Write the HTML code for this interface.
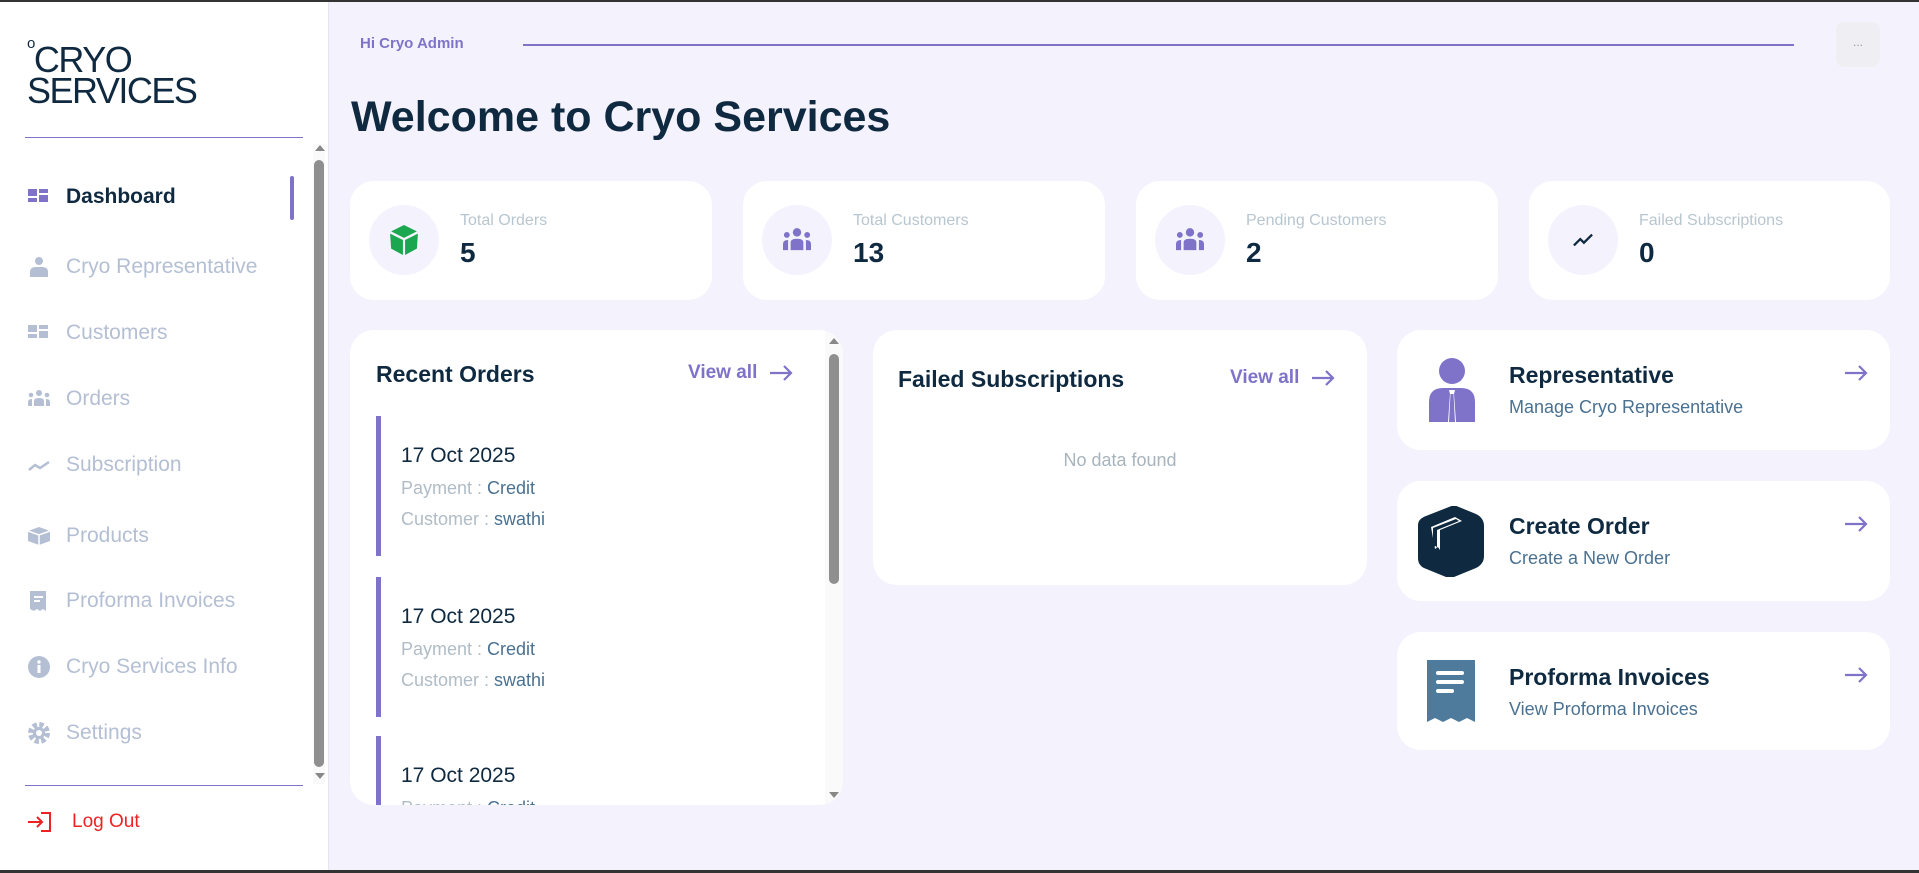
<!DOCTYPE html>
<html><head><meta charset="utf-8"><style>
*{box-sizing:border-box;margin:0;padding:0}
body{width:1919px;height:873px;overflow:hidden;background:#f4f3fd;font-family:"Liberation Sans",sans-serif;position:relative;color:#0f2a40}
.abs{position:absolute}
.top{left:0;top:0;width:1919px;height:2px;background:#333}
.bot{left:0;top:870px;width:1919px;height:3px;background:#333}
.side{left:0;top:2px;width:329px;height:868px;background:#fff;border-right:1px solid #e6e4f3}
.nav{position:absolute;left:27px;font-size:21px;color:#b4bfd4;display:flex;align-items:center}
.nav svg{width:24px;height:22px;margin-right:15px}
.card{position:absolute;background:#fff;border-radius:24px}
.ic{position:absolute;left:19px;top:24px;width:70px;height:70px;border-radius:50%;background:#f4f3fd;display:flex;align-items:center;justify-content:center}
.lab{position:absolute;left:110px;top:31px;font-size:16px;color:#b8c6cf}
.val{position:absolute;left:110px;top:56px;font-size:28px;font-weight:bold;color:#0f2a40}
.h{font-size:23px;font-weight:bold;color:#0f2a40;position:absolute}
.va{position:absolute;font-size:19px;font-weight:bold;color:#7f73c9;display:flex;align-items:center}
.va svg{margin-left:12px}
.ord{position:absolute;left:26px;width:420px;height:140px;border-left:5px solid #7f73c9;padding-left:20px}
.ord .d{font-size:21px;margin-top:28px;color:#0f2a40}
.ord .p{font-size:18px;color:#b0bcc6;margin-top:10px}
.ord .p b{font-weight:normal;color:#4a7191}
.rc .t{position:absolute;left:112px;top:32px;font-size:23px;font-weight:bold}
.rc .s{position:absolute;left:112px;top:67px;font-size:18px;color:#4a7191}
.rc .ar{position:absolute;right:22px;top:35px}
</style></head><body>
<div class="abs top"></div>
<div class="abs side">
 <div class="abs" style="left:27px;top:42px;font-size:36px;line-height:31px;color:#0f2a40;letter-spacing:-1.5px">
  <span style="font-size:15px;vertical-align:top;line-height:12px;position:relative;top:-6px">o</span>CRYO<br>SERVICES</div>
 <div class="abs" style="left:25px;top:135px;width:278px;height:1px;background:#7f73c9"></div>
 <div class="abs" style="left:313px;top:142px;width:12px;height:640px;background:#fafafa"></div>
 <div class="abs" style="left:315px;top:143px;width:0;height:0;border-left:5px solid transparent;border-right:5px solid transparent;border-bottom:6px solid #888"></div>
 <div class="abs" style="left:314px;top:158px;width:10px;height:607px;border-radius:5px;background:#8f8f8f"></div>
 <div class="abs" style="left:315px;top:771px;width:0;height:0;border-left:5px solid transparent;border-right:5px solid transparent;border-top:6px solid #888"></div>
 <div class="abs" style="left:290px;top:174px;width:4px;height:44px;border-radius:2px;background:#7f73c9"></div>

 <div class="nav" style="top:183px;color:#0f2a40;font-weight:bold"><svg viewBox="0 0 24 22"><rect x="1" y="3" width="9" height="7" fill="#7f73c9"/><rect x="12" y="3" width="9" height="4" fill="#7f73c9"/><rect x="1" y="12" width="9" height="4" fill="#7f73c9"/><rect x="12" y="9" width="9" height="7" fill="#7f73c9"/></svg>Dashboard</div>
 <div class="nav" style="top:253px"><svg viewBox="0 0 24 22"><circle cx="12" cy="5" r="4" fill="#b4bfd4"/><path d="M3 21v-5q0-5 6-5h6q6 0 6 5v5z" fill="#b4bfd4"/></svg>Cryo Representative</div>
 <div class="nav" style="top:319px"><svg viewBox="0 0 24 22"><rect x="1" y="3" width="9" height="7" fill="#b4bfd4"/><rect x="12" y="3" width="9" height="4" fill="#b4bfd4"/><rect x="1" y="12" width="9" height="4" fill="#b4bfd4"/><rect x="12" y="9" width="9" height="7" fill="#b4bfd4"/></svg>Customers</div>
 <div class="nav" style="top:385px"><svg viewBox="0 0 24 22"><circle cx="12" cy="5" r="3" fill="#b4bfd4"/><circle cx="4" cy="7" r="2.3" fill="#b4bfd4"/><circle cx="20" cy="7" r="2.3" fill="#b4bfd4"/><path d="M7 18v-5q0-3 5-3t5 3v5zM1 18v-4q0-3 4-3v7zM23 18v-4q0-3-4-3v7z" fill="#b4bfd4"/></svg>Orders</div>
 <div class="nav" style="top:451px"><svg viewBox="0 0 24 22"><path d="M2 16l6-5 5 3 9-6" stroke="#b4bfd4" stroke-width="2.5" fill="none"/></svg>Subscription</div>
 <div class="nav" style="top:522px"><svg viewBox="0 0 24 22"><path d="M1 6l11-4 11 4v10l-11 4-11-4z" fill="#b4bfd4"/><path d="M1 6l11 4 11-4M12 10v10" stroke="#fff" stroke-width="1.5" fill="none"/></svg>Products</div>
 <div class="nav" style="top:587px"><svg viewBox="0 0 24 22"><path d="M3 1h16v20l-3-2-3 2-3-2-3 2-4-2z" fill="#b4bfd4"/><path d="M7 7h9M7 11h6" stroke="#fff" stroke-width="2"/></svg>Proforma Invoices</div>
 <div class="nav" style="top:653px"><svg viewBox="0 0 24 22"><circle cx="12" cy="11" r="11" fill="#b4bfd4"/><rect x="10.5" y="9" width="3" height="8" fill="#fff"/><circle cx="12" cy="6" r="1.7" fill="#fff"/></svg>Cryo Services Info</div>
 <div class="nav" style="top:719px"><svg viewBox="0 0 24 22"><circle cx="12" cy="11" r="8" fill="none" stroke="#b4bfd4" stroke-width="6" stroke-dasharray="4 2.3"/><circle cx="12" cy="11" r="6" fill="#b4bfd4"/><circle cx="12" cy="11" r="3" fill="#fff"/></svg>Settings</div>
 <div class="abs" style="left:25px;top:783px;width:278px;height:1px;background:#7f73c9"></div>
 <div class="nav" style="top:809px;color:#ee2222;font-size:19px"><svg viewBox="0 0 26 22" style="width:26px;margin-right:19px"><path d="M1 11h14M10 6l5 5-5 5M14 2h9v18h-9" stroke="#ee2222" stroke-width="2" fill="none"/></svg>Log Out</div>
</div>

<div class="abs" style="left:360px;top:35px;font-size:15px;font-weight:bold;color:#7f73c9">Hi Cryo Admin</div>
<div class="abs" style="left:523px;top:44px;width:1271px;height:2px;background:#7f73c9"></div>
<div class="abs" style="left:1836px;top:22px;width:44px;height:45px;border-radius:8px;background:#efeff3;color:#999;font-size:12px;text-align:center;line-height:40px">...</div>
<div class="abs" style="left:351px;top:93px;font-size:43px;font-weight:bold;color:#0f2a40">Welcome to Cryo Services</div>

<div class="card" style="left:350px;top:181px;width:362px;height:119px">
 <div class="ic"><svg width="30" height="34" viewBox="0 0 28 30"><path d="M14 1l12 6-12 6-12-6z" fill="#1aa750"/><path d="M1 9l12 6v14L2 23zM27 9l-12 6v14l11-6z" fill="#1aa750"/></svg></div>
 <div class="lab">Total Orders</div><div class="val">5</div></div>
<div class="card" style="left:743px;top:181px;width:362px;height:119px">
 <div class="ic"><svg width="32" height="28" viewBox="0 0 24 22"><circle cx="12" cy="5" r="3.3" fill="#7f73c9"/><circle cx="4" cy="7" r="2.3" fill="#7f73c9"/><circle cx="20" cy="7" r="2.3" fill="#7f73c9"/><path d="M7 19v-6q0-3 5-3t5 3v6zM1 19v-5q0-3 4-3v8zM23 19v-5q0-3-4-3v8z" fill="#7f73c9"/></svg></div>
 <div class="lab">Total Customers</div><div class="val">13</div></div>
<div class="card" style="left:1136px;top:181px;width:362px;height:119px">
 <div class="ic"><svg width="32" height="28" viewBox="0 0 24 22"><circle cx="12" cy="5" r="3.3" fill="#7f73c9"/><circle cx="4" cy="7" r="2.3" fill="#7f73c9"/><circle cx="20" cy="7" r="2.3" fill="#7f73c9"/><path d="M7 19v-6q0-3 5-3t5 3v6zM1 19v-5q0-3 4-3v8zM23 19v-5q0-3-4-3v8z" fill="#7f73c9"/></svg></div>
 <div class="lab">Pending Customers</div><div class="val">2</div></div>
<div class="card" style="left:1529px;top:181px;width:361px;height:119px">
 <div class="ic"><svg width="26" height="20" viewBox="0 0 24 22"><path d="M2 17l7-7 4 4 9-9" stroke="#0f2a40" stroke-width="2.5" fill="none"/></svg></div>
 <div class="lab">Failed Subscriptions</div><div class="val">0</div></div>

<div class="card" style="left:350px;top:330px;width:493px;height:475px;overflow:hidden">
 <div class="h" style="left:26px;top:31px">Recent Orders</div>
 <div class="va" style="left:338px;top:32px">View all<svg width="24" height="16" viewBox="0 0 24 16"><path d="M1 8h21M15 1l7 7-7 7" stroke="#7f73c9" stroke-width="2.2" fill="none"/></svg></div>
 <div class="ord" style="top:86px"><div class="d">17 Oct 2025</div><div class="p">Payment : <b>Credit</b></div><div class="p">Customer : <b>swathi</b></div></div>
 <div class="ord" style="top:247px"><div class="d">17 Oct 2025</div><div class="p">Payment : <b>Credit</b></div><div class="p">Customer : <b>swathi</b></div></div>
 <div class="ord" style="top:406px"><div class="d">17 Oct 2025</div><div class="p">Payment : <b>Credit</b></div></div>
 <div class="abs" style="left:475px;top:0;width:18px;height:475px;background:#fafafa"></div>
 <div class="abs" style="left:479px;top:8px;border-left:5px solid transparent;border-right:5px solid transparent;border-bottom:6px solid #888"></div>
 <div class="abs" style="left:479px;top:24px;width:10px;height:230px;border-radius:5px;background:#8f8f8f"></div>
 <div class="abs" style="left:479px;top:462px;border-left:5px solid transparent;border-right:5px solid transparent;border-top:6px solid #888"></div>
</div>

<div class="card" style="left:873px;top:330px;width:494px;height:255px">
 <div class="h" style="left:25px;top:36px">Failed Subscriptions</div>
 <div class="va" style="left:357px;top:37px">View all<svg width="24" height="16" viewBox="0 0 24 16"><path d="M1 8h21M15 1l7 7-7 7" stroke="#7f73c9" stroke-width="2.2" fill="none"/></svg></div>
 <div class="abs" style="left:0;width:494px;top:120px;text-align:center;font-size:18px;color:#a8b4bd">No data found</div>
</div>

<div class="card rc" style="left:1397px;top:330px;width:493px;height:120px">
 <svg class="abs" style="left:30px;top:28px" width="50" height="64" viewBox="0 0 50 64"><circle cx="25" cy="13" r="13" fill="#7f73c9"/><path d="M2 64v-20q0-14 14-14h18q14 0 14 14v20z" fill="#7f73c9"/><path d="M22 32h6l-1 4 2 28h-8l2-28z" fill="#fff"/><path d="M23.5 36h3l1.5 28h-6z" fill="#7f73c9"/></svg>
 <div class="t">Representative</div><div class="s">Manage Cryo Representative</div>
 <svg class="ar" width="24" height="16" viewBox="0 0 24 16"><path d="M1 8h21M15 1l7 7-7 7" stroke="#7f73c9" stroke-width="2.2" fill="none"/></svg></div>
<div class="card rc" style="left:1397px;top:481px;width:493px;height:120px">
 <svg class="abs" style="left:21px;top:25px" width="66" height="71" viewBox="0 0 66 71"><path d="M8 10l28-11 22 9q8 4 8 12v30q0 8-8 12l-22 9q-4 1-8 0l-22-9q-6-3-6-10v-33q0-6 8-9z" fill="#0f2a40"/><path d="M13 21l24-10 7 4-22 9v20l-2-3-3 2z" fill="#fff"/><path d="M15 22l23-9 3 2-22 9v18l-1-2-3 1z" fill="#0f2a40"/></svg>
 <div class="t">Create Order</div><div class="s">Create a New Order</div>
 <svg class="ar" width="24" height="16" viewBox="0 0 24 16"><path d="M1 8h21M15 1l7 7-7 7" stroke="#7f73c9" stroke-width="2.2" fill="none"/></svg></div>
<div class="card rc" style="left:1397px;top:632px;width:493px;height:118px">
 <svg class="abs" style="left:28px;top:28px" width="52" height="64" viewBox="0 0 52 64"><path d="M2 0h48v62l-8-4-8 4-8-4-8 4-8-4-8 4z" fill="#4e7a9c"/><path d="M13 13h24M13 22h24M13 31h14" stroke="#fff" stroke-width="4" stroke-linecap="round"/></svg>
 <div class="t">Proforma Invoices</div><div class="s">View Proforma Invoices</div>
 <svg class="ar" width="24" height="16" viewBox="0 0 24 16"><path d="M1 8h21M15 1l7 7-7 7" stroke="#7f73c9" stroke-width="2.2" fill="none"/></svg></div>
<div class="abs bot"></div>
</body></html>
